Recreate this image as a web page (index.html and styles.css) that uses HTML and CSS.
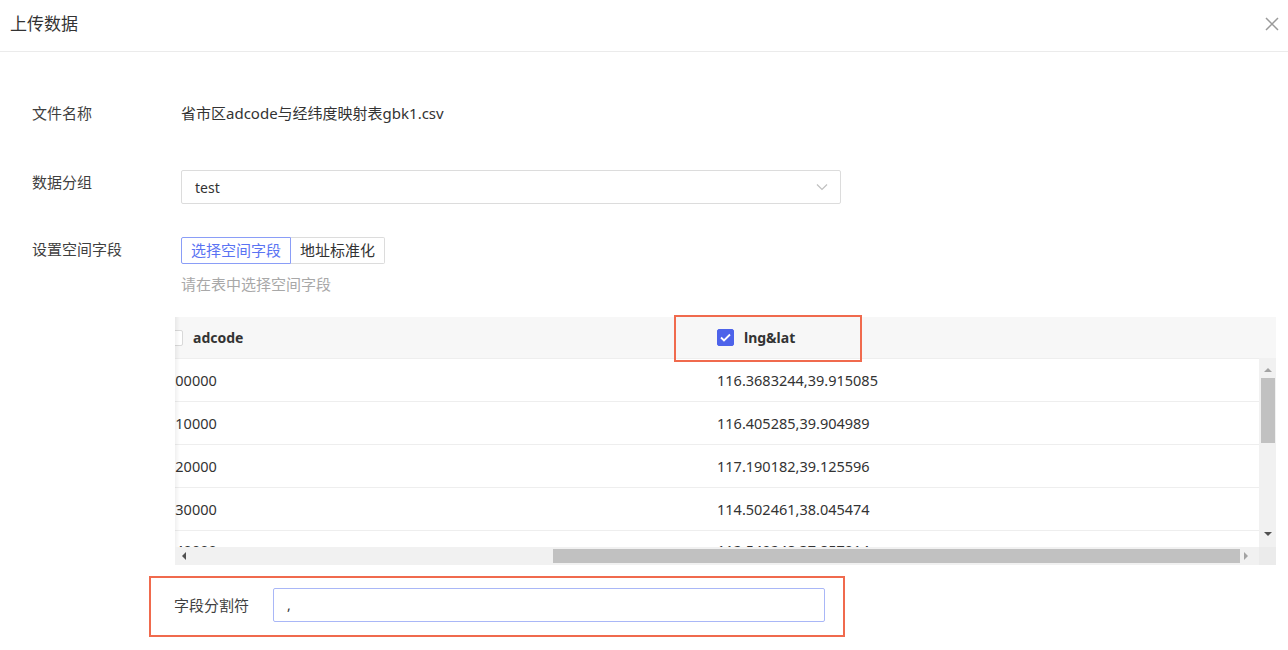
FILE: index.html
```html
<!DOCTYPE html>
<html lang="zh-CN">
<head>
    <meta charset="UTF-8">
    <meta name="viewport" content="width=device-width, initial-scale=1.0">
    <title>上传数据</title>
    <link rel="stylesheet" href="styles.css">
</head>
<body>
    <div class="dialog">
        <!-- 标题栏 -->
        <div class="dialog-header">
            <span class="dialog-title">上传数据</span>
            <button class="dialog-close" aria-label="关闭">
                <svg width="14" height="14" viewBox="0 0 14 14">
                    <path d="M1 1 L13 13 M13 1 L1 13" stroke="#9a9a9a" stroke-width="1.5" fill="none"/>
                </svg>
            </button>
        </div>

        <div class="dialog-body">
            <div class="form-row row-file">
                <label class="form-label">文件名称</label>
                <div class="form-value">省市区adcode与经纬度映射表gbk1.csv</div>
            </div>

            <div class="form-row row-group">
                <label class="form-label">数据分组</label>
                <div class="select">
                    <span>test</span>
                    <svg class="select-arrow" width="12" height="8" viewBox="0 0 12 8">
                        <path d="M1 1.5 L6 6.5 L11 1.5" stroke="#c0c0c0" stroke-width="1.2" fill="none"/>
                    </svg>
                </div>
            </div>

            <div class="form-row row-field">
                <label class="form-label">设置空间字段</label>
                <div>
                    <div class="seg">
                        <button class="seg-btn active">选择空间字段</button>
                        <button class="seg-btn">地址标准化</button>
                    </div>
                    <div class="hint">请在表中选择空间字段</div>
                </div>
            </div>

            <!-- 数据预览表 -->
            <div class="table-wrap">
                <div class="table-head">
                    <div class="table-inner">
                        <div class="th col-1">
                            <span class="checkbox"></span>
                            <span>adcode</span>
                        </div>
                        <div class="th col-2">
                            <span class="checkbox checked">
                                <svg width="11" height="9" viewBox="0 0 11 9">
                                    <path d="M1 4.5 L4 7.5 L10 1.5" stroke="#fff" stroke-width="1.8" fill="none"/>
                                </svg>
                            </span>
                            <span>lng&amp;lat</span>
                        </div>
                    </div>
                </div>

                <div class="table-main">
                    <div class="table-rows">
                        <div class="table-inner tr"><div class="td col-1">100000</div><div class="td col-2">116.3683244,39.915085</div></div>
                        <div class="table-inner tr"><div class="td col-1">110000</div><div class="td col-2">116.405285,39.904989</div></div>
                        <div class="table-inner tr"><div class="td col-1">120000</div><div class="td col-2">117.190182,39.125596</div></div>
                        <div class="table-inner tr"><div class="td col-1">130000</div><div class="td col-2">114.502461,38.045474</div></div>
                        <div class="table-inner tr"><div class="td col-1">140000</div><div class="td col-2">112.549248,37.857014</div></div>
                    </div>
                    <div class="vscroll">
                        <span class="arrow arrow-up off"></span>
                        <span class="vthumb"></span>
                        <span class="arrow arrow-down"></span>
                    </div>
                </div>

                <div class="table-foot">
                    <div class="hscroll">
                        <span class="arrow arrow-left"></span>
                        <span class="hthumb"></span>
                        <span class="arrow arrow-right off"></span>
                    </div>
                    <div class="corner"></div>
                </div>

                <div class="mark mark-col"></div>
            </div>

            <div class="sep-box">
                <label class="sep-label">字段分割符</label>
                <div class="sep-input">,</div>
            </div>
        </div>
    </div>
</body>
</html>
```

FILE: styles.css
```css
:root {
    --primary: #5a73f3;
    --mark: #f06a4d;
    --border: #dcdcdc;
    --line: #eeeeee;
    --text: #333;
    --label: #3f3f3f;
    --scroll-track: #f1f1f1;
    --scroll-thumb: #c1c1c1;
}

body {
    margin: 0;
    font-family: "Noto Sans", "Noto Sans CJK SC", sans-serif;
    color: var(--text);
    background: #fff;
}

.dialog-header {
    height: 51px;
    border-bottom: 1px solid #ebebeb;
    display: flex;
    justify-content: space-between;
    align-items: flex-start;
    padding: 0 9px 0 10px;
}

.dialog-title {
    font-size: 17px;
    line-height: 24px;
    padding-top: 12px;
    color: #333;
}

.dialog-close {
    border: none;
    background: none;
    padding: 0;
    margin-top: 17px;
    width: 14px;
    height: 14px;
    cursor: pointer;
}

.dialog-body {
    padding-left: 32px;
}

.form-row {
    display: flex;
    align-items: flex-start;
}

.form-label {
    width: 149px;
    flex-shrink: 0;
    font-size: 15px;
    line-height: 24px;
    color: var(--label);
}

.row-file {
    margin-top: 50px;
}

.row-file .form-label,
.form-value {
    line-height: 22px;
    font-size: 15px;
}

.form-value {
    color: var(--text);
}

.row-group {
    margin-top: 46px;
}

.select {
    width: 660px;
    height: 34px;
    box-sizing: border-box;
    border: 1px solid var(--border);
    border-radius: 2px;
    padding: 0 13px;
    display: flex;
    align-items: center;
    justify-content: space-between;
    font-size: 14px;
}

.select-arrow {
    margin-right: -1px;
}

.row-field {
    margin-top: 33px;
}

.seg {
    display: flex;
}

.seg-btn {
    height: 27px;
    padding: 0 9px;
    font-family: inherit;
    font-size: 15px;
    line-height: 25px;
    background: #fff;
    color: var(--text);
    border: 1px solid var(--border);
    border-left: none;
    border-radius: 0 2px 2px 0;
}

.seg-btn.active {
    color: var(--primary);
    border: 1px solid #8a9df7;
    border-radius: 2px 0 0 2px;
}

.hint {
    margin-top: 10px;
    font-size: 15px;
    line-height: 20px;
    color: #a8a8a8;
}

/* 表格 */
.table-wrap {
    position: relative;
    margin: 23px 0 0 143px;
    width: 1101px;
}

.table-wrap::before {
    content: "";
    position: absolute;
    left: 0;
    top: 0;
    bottom: 18px;
    width: 5px;
    background: linear-gradient(to right, rgba(0, 0, 0, 0.06), rgba(0, 0, 0, 0));
    z-index: 2;
}

.table-head {
    height: 41px;
    border-bottom: 1px solid var(--line);
    background: #f7f7f7;
    overflow: hidden;
}

.table-inner {
    display: flex;
    margin-left: -8px;
}

.th {
    display: flex;
    align-items: center;
    gap: 10px;
    height: 41px;
    font-size: 14px;
    font-weight: bold;
    color: #333;
}

.col-1 {
    width: 550px;
    flex-shrink: 0;
}

.col-2 {
    flex: 1;
}

.checkbox {
    width: 16px;
    height: 16px;
    box-sizing: border-box;
    border: 1px solid #d9d9d9;
    border-radius: 2px;
    background: #fff;
    display: inline-flex;
    align-items: center;
    justify-content: center;
}

.checkbox.checked {
    width: 17px;
    height: 17px;
    background: #4d63ea;
    border-color: #4d63ea;
}

.table-main {
    display: flex;
    height: 188px;
}

.table-rows {
    width: 1084px;
    overflow: hidden;
}

.tr {
    height: 42px;
    border-bottom: 1px solid var(--line);
    align-items: center;
}

.td {
    font-size: 14.5px;
    color: #333;
}

.tr:last-child .td {
    margin-top: -4px;
}

.vscroll,
.hscroll {
    position: relative;
    background: var(--scroll-track);
}

.vscroll {
    width: 17px;
    margin-top: -1px;
}

.vthumb {
    position: absolute;
    left: 2px;
    right: 1px;
    top: 20px;
    height: 65px;
    background: var(--scroll-thumb);
}

.table-foot {
    display: flex;
    height: 18px;
}

.hscroll {
    width: 1084px;
}

.hthumb {
    position: absolute;
    top: 2px;
    bottom: 2px;
    left: 378px;
    width: 687px;
    background: var(--scroll-thumb);
}

.corner {
    width: 17px;
    background: #ebebeb;
}

.arrow {
    position: absolute;
    width: 0;
    height: 0;
    border: 4px solid transparent;
}

.arrow-up {
    left: 5px;
    top: 6px;
    border-bottom-color: #505050;
}

.arrow-down {
    left: 5px;
    bottom: 7px;
    border-top-color: #505050;
}

.arrow-left {
    left: 3px;
    top: 5px;
    border-right-color: #505050;
}

.arrow-right {
    right: 7px;
    top: 5px;
    border-left-color: #505050;
}

.arrow-up.off {
    border-bottom-color: #a3a3a3;
}

.arrow-right.off {
    border-left-color: #a3a3a3;
}

.mark {
    position: absolute;
    border: 2px solid var(--mark);
    z-index: 3;
}

.mark-col {
    left: 499px;
    top: -2px;
    width: 184px;
    height: 43px;
}

/* 分割符 */
.sep-box {
    display: flex;
    align-items: flex-start;
    margin: 11px 0 0 117px;
    width: 696px;
    height: 61px;
    box-sizing: border-box;
    border: 2px solid var(--mark);
    padding: 10px 18px 0 23px;
}

.sep-label {
    width: 99px;
    flex-shrink: 0;
    font-size: 15px;
    line-height: 34px;
    color: var(--label);
}

.sep-input {
    flex: 1;
    height: 34px;
    box-sizing: border-box;
    border: 1px solid #a9b7f7;
    border-radius: 2px;
    padding-left: 13px;
    font-size: 14px;
    line-height: 32px;
}
```
